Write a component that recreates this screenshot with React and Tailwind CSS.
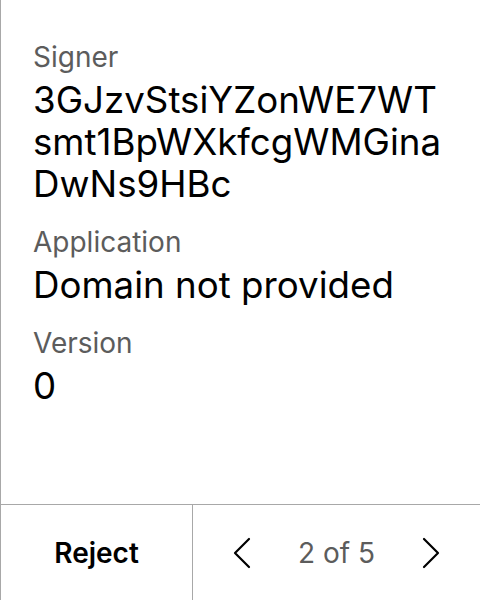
import React from 'react'

const Field = ({ label, children }) => (
  <div className="flex flex-col gap-[4px]">
    <span className="text-[28px] leading-[36px] text-[#5c5c5c]">{label}</span>
    <span className="text-[36.7px] leading-[42px] text-black break-all">{children}</span>
  </div>
)

const Chevron = ({ dir }) => (
  <svg width="18" height="32" viewBox="0 0 18 32" fill="none" stroke="black" strokeWidth="2.2" strokeLinecap="round" strokeLinejoin="round">
    {dir === 'left' ? <path d="M16 2 L2 16 L16 30" /> : <path d="M2 2 L16 16 L2 30" />}
  </svg>
)

export default function App() {
  return (
    <div
      className="flex h-[600px] w-[480px] flex-col border-l border-[#a8a8a8] bg-white"
      style={{ fontFamily: 'Inter, "Noto Sans", sans-serif' }}
    >
      {/* Details */}
      <div className="flex flex-1 flex-col gap-[19px] pl-[32px] pr-[16px] pt-[39px]">
        <Field label="Signer">
          3GJzvStsiYZonWE7WT
          <br />
          smt1BpWXkfcgWMGina
          <br />
          DwNs9HBc
        </Field>
        <Field label="Application">Domain not provided</Field>
        <Field label="Version">0</Field>
      </div>

      {/* Footer */}
      <div className="flex h-[96px] border-t border-[#a8a8a8]">
        <button className="flex w-[192px] items-center justify-center border-r border-[#a8a8a8] text-[28px] font-semibold text-black">
          Reject
        </button>
        <div className="flex flex-1 items-center justify-between px-[40px]">
          <Chevron dir="left" />
          <span className="text-[28px] text-[#5c5c5c]">2 of 5</span>
          <Chevron dir="right" />
        </div>
      </div>
    </div>
  )
}
